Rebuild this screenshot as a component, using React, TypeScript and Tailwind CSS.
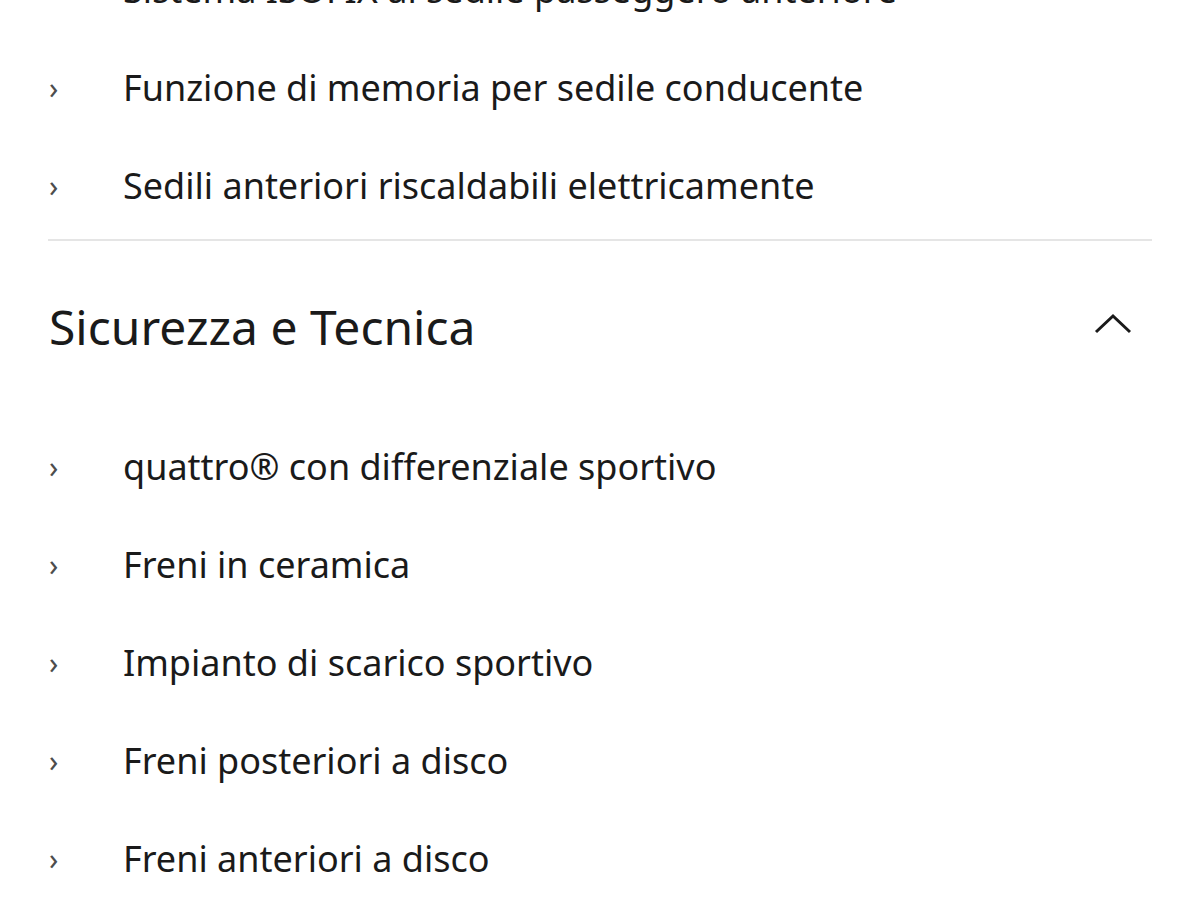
const comfort = [
  "Sistema ISOFIX al sedile passeggero anteriore",
  "Funzione di memoria per sedile conducente",
  "Sedili anteriori riscaldabili elettricamente",
];

const safety = [
  "quattro® con differenziale sportivo",
  "Freni in ceramica",
  "Impianto di scarico sportivo",
  "Freni posteriori a disco",
  "Freni anteriori a disco",
];

function Item({ label }: { label: string }) {
  return (
    <li className="flex h-[98px] items-center">
      <span className="w-[75px] pl-[1px] text-[30px] leading-none text-[#4d4d4d]">›</span>
      <span className="text-[36px] leading-none text-[#1a1a1a]">{label}</span>
    </li>
  );
}

export default function App() {
  return (
    <div
      className="h-[900px] w-[1200px] overflow-hidden bg-white"
      style={{ fontFamily: '"Noto Sans", "Open Sans", sans-serif' }}
    >
      <div className="mt-[-59px] px-[48px]">
        <ul className="border-b-2 border-[#e5e5e5] pb-[4px]">
          {comfort.map((c) => (
            <Item key={c} label={c} />
          ))}
        </ul>

        <section>
          <div className="flex h-[172px] items-center justify-between">
            <h2 className="pl-[1px] text-[48px] font-normal leading-none text-[#1a1a1a]">Sicurezza e Tecnica</h2>
            <svg width="40" height="24" viewBox="0 0 40 24" className="mb-[6px] mr-[19px]" fill="none">
              <path d="M3 20 L20 4 L37 20" stroke="#1a1a1a" strokeWidth="3" />
            </svg>
          </div>
          <ul className="mt-[5px]">
            {safety.map((s) => (
              <Item key={s} label={s} />
            ))}
          </ul>
        </section>
      </div>
    </div>
  );
}
